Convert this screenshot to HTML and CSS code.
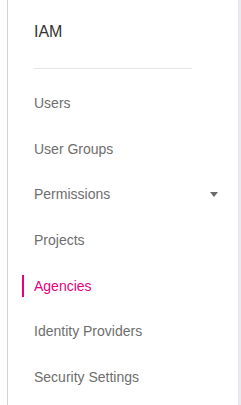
FILE: index.html
```html
<!DOCTYPE html>
<html lang="en">
<head>
<meta charset="UTF-8">
<meta name="viewport" content="width=device-width, initial-scale=1.0">
<title>IAM</title>
<link rel="stylesheet" href="styles.css">
</head>
<body>

<div class="layout">
    <div class="sidebar">
        <div class="title">IAM</div>
        <div class="divider"></div>
        <ul class="menu">
            <li class="menu-item">Users</li>
            <li class="menu-item">User Groups</li>
            <li class="menu-item">
                <span>Permissions</span>
                <svg class="caret" width="8" height="5" viewBox="0 0 8 5"><polygon points="0,0 8,0 4,5" fill="#6b6b6b"/></svg>
            </li>
            <li class="menu-item">Projects</li>
            <li class="menu-item active">Agencies</li>
            <li class="menu-item">Identity Providers</li>
            <li class="menu-item">Security Settings</li>
        </ul>
    </div>
    <div class="content"></div>
</div>

</body>
</html>
```

FILE: styles.css
```css
body {
    margin: 0;
    padding: 0;
    background-color: #fff;
    font-family: 'Liberation Sans', Arial, sans-serif;
}
.layout {
    display: flex;
    height: 405px;
    padding-left: 7px;
}
.sidebar {
    width: 196px; /* 231 - border - padding */
    border-left: 1px solid #d4d4d4;
    padding: 21px 20px 0 14px;
    background: #fff;
}
.content {
    flex: 1;
    background-color: #eaebf1;
    border-left: 1px solid #e3e4ea;
}
.title {
    margin-left: 12px;
    font-size: 16px;
    line-height: 22px;
    color: #333;
}
.divider {
    margin: 25px 0 0 12px;
    width: 158px;
    height: 1px;
    background-color: #e5e5e5;
}
.menu {
    list-style: none;
    margin: 23px 0 0;
    padding: 0;
    display: flex;
    flex-direction: column;
    gap: 23.7px;
}
.menu-item {
    display: flex;
    align-items: center;
    justify-content: space-between;
    border-left: 2px solid transparent;
    padding-left: 10px;
    font-size: 14px;
    line-height: 22px;
    color: #6e6e6e;
}
.menu-item.active {
    border-left-color: #e8007f;
    color: #e8007f;
}
.caret {
    display: block;
}
```
